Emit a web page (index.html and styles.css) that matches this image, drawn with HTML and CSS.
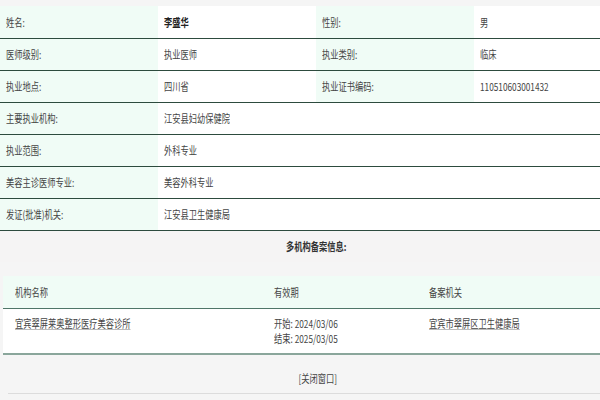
FILE: index.html
```html
<!DOCTYPE html>
<html lang="zh-CN">
<head>
<meta charset="utf-8">
<title>医师信息</title>
<link rel="stylesheet" href="styles.css">
</head>
<body>
<div class="page">
  <table class="info">
    <colgroup><col class="w1"><col class="w2"><col class="w3"><col class="w4"></colgroup>
    <tr><td class="lb"><span class="t">姓名:</span></td><td class="val strong"><span class="t">李盛华</span></td><td class="lb"><span class="t">性别:</span></td><td class="val"><span class="t">男</span></td></tr>
    <tr><td class="lb"><span class="t">医师级别:</span></td><td class="val"><span class="t">执业医师</span></td><td class="lb"><span class="t">执业类别:</span></td><td class="val"><span class="t">临床</span></td></tr>
    <tr><td class="lb"><span class="t">执业地点:</span></td><td class="val"><span class="t">四川省</span></td><td class="lb"><span class="t">执业证书编码:</span></td><td class="val"><span class="t">110510603001432</span></td></tr>
    <tr><td class="lb"><span class="t">主要执业机构:</span></td><td class="val" colspan="3"><span class="t">江安县妇幼保健院</span></td></tr>
    <tr><td class="lb"><span class="t">执业范围:</span></td><td class="val" colspan="3"><span class="t">外科专业</span></td></tr>
    <tr><td class="lb"><span class="t">美容主诊医师专业:</span></td><td class="val" colspan="3"><span class="t">美容外科专业</span></td></tr>
    <tr><td class="lb"><span class="t">发证(批准)机关:</span></td><td class="val" colspan="3"><span class="t">江安县卫生健康局</span></td></tr>
    <tr><td class="section" colspan="4"><span class="t tc">多机构备案信息:</span></td></tr>
  </table>
  <div class="sub-wrap">
    <table class="sub">
      <colgroup><col class="s1"><col class="s2"><col class="s3"></colgroup>
      <thead>
        <tr><th><span class="t">机构名称</span></th><th><span class="t">有效期</span></th><th><span class="t">备案机关</span></th></tr>
      </thead>
      <tbody>
        <tr>
          <td><span class="t link">宜宾翠屏莱奥整形医疗美容诊所</span></td>
          <td><span class="t">开始: 2024/03/06<br>结束: 2025/03/05</span></td>
          <td><span class="t link">宜宾市翠屏区卫生健康局</span></td>
        </tr>
      </tbody>
    </table>
  </div>
  <div class="close"><span class="t tc">[关闭窗口]</span></div>
</div>
</body>
</html>
```

FILE: styles.css
```css
html, body {
  margin: 0;
  padding: 0;
  background: #f5f5f5;
}
.page {
  width: 600px;
  padding-top: 6px;
  font-family: "Noto Sans CJK SC", "Noto Sans", sans-serif;
  font-size: 11px;
  color: #444;
  overflow: hidden;
}
.t {
  display: inline-block;
  white-space: nowrap;
  transform: scaleX(0.75);
  transform-origin: 0 50%;
}
.t.tc {
  transform-origin: 50% 50%;
}
.info {
  width: 600px;
  border-collapse: collapse;
  table-layout: fixed;
}
.info .w1 { width: 158px; }
.info .w2 { width: 158px; }
.info .w3 { width: 158px; }
.info .w4 { width: 126px; }
.info td {
  box-sizing: border-box;
  height: 32px;
  padding: 0 6px;
  border-bottom: 1px solid #2d4b3e;
  vertical-align: middle;
  white-space: nowrap;
  overflow: hidden;
}
.info .lb {
  background: #f0fcf6;
}
.info .val {
  background: #fff;
}
.info .strong {
  font-weight: bold;
  color: #222;
}
.info .section {
  border-bottom: none;
  background: #f5f4f4;
  text-align: center;
  font-weight: bold;
  color: #333;
  height: 32px;
  padding-left: 38px;
}
.sub-wrap {
  padding: 14px 0 0 3px;
}
.sub {
  width: 597px;
  border-collapse: collapse;
  table-layout: fixed;
}
.sub .s1 { width: 259px; }
.sub .s2 { width: 155px; }
.sub .s3 { width: 183px; }
.sub th {
  box-sizing: border-box;
  height: 32px;
  padding: 0 12px;
  text-align: left;
  font-weight: normal;
  color: #444;
  background: #f0fcf6;
  border-bottom: 1px solid #4f7668;
  white-space: nowrap;
}
.sub td {
  box-sizing: border-box;
  height: 46px;
  padding: 7px 12px 0;
  vertical-align: top;
  line-height: 15px;
  background: #fff;
  border-bottom: 2px solid #8aa69b;
  white-space: nowrap;
  overflow: hidden;
}
.link {
  text-decoration: underline;
  text-decoration-color: #bbb;
}
.close {
  margin-left: 8px;
  height: 39px;
  padding: 8px 0 0 28px;
  box-sizing: border-box;
  border-bottom: 1px solid #dcdcdc;
  display: flex;
  align-items: center;
  justify-content: center;
  color: #444;
}
```
